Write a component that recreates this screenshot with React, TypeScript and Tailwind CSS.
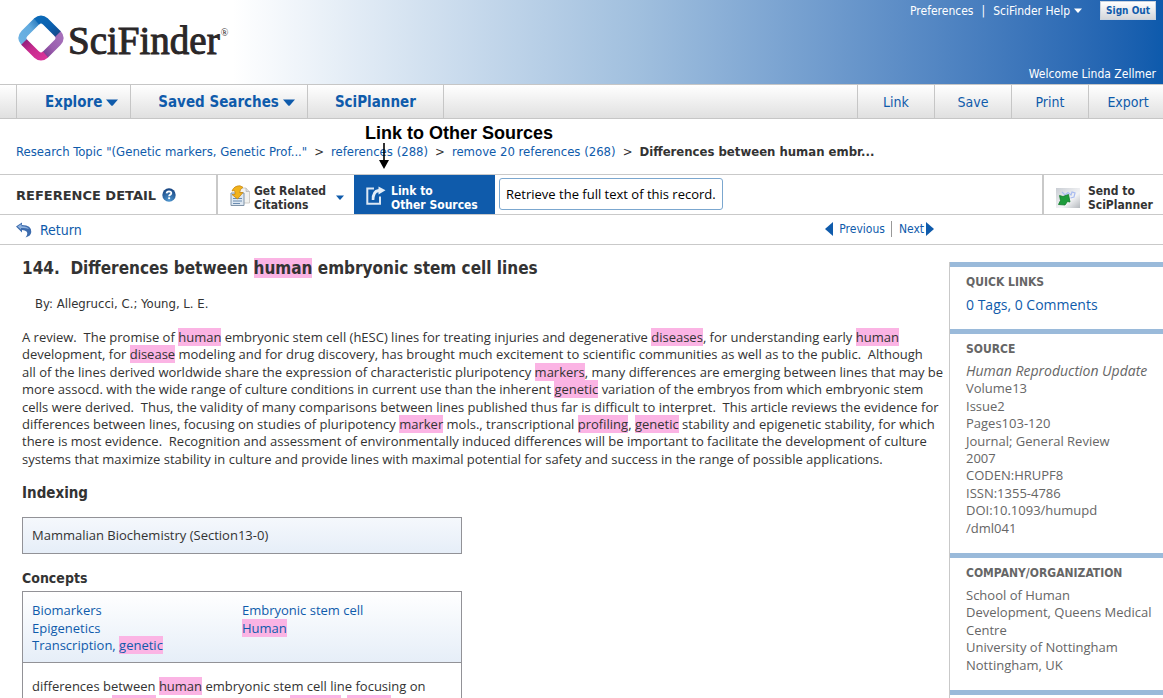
import type { ReactNode } from "react";

function Hit({ children }: { children: ReactNode }) {
  return <mark className="bg-[#fbb4e4] text-inherit">{children}</mark>;
}

function Caret({ className = "" }: { className?: string }) {
  return (
    <svg viewBox="0 0 12 7" className={className} aria-hidden="true">
      <path d="M0 0.500H12L6.800 6.400Q6 7 5.200 6.400Z" fill="currentColor" />
    </svg>
  );
}

function Logo() {
  return (
    <a href="#home" className="flex items-start gap-1 text-[#2b2728]" aria-label="SciFinder home">
      <svg viewBox="0 0 46 46" className="h-[46px] w-[46px]" fill="none" strokeWidth="7.800" aria-hidden="true">
        <defs>
          <linearGradient id="lb" x1="0" y1="1" x2="1" y2="0"><stop offset="0" stopColor="#6bb1e2" /><stop offset="0.600" stopColor="#62abdf" /><stop offset="1" stopColor="#2f7fc0" /></linearGradient>
          <linearGradient id="db" x1="0" y1="0" x2="1" y2="1"><stop offset="0" stopColor="#0b6ab8" /><stop offset="0.600" stopColor="#0b5fae" /><stop offset="1" stopColor="#144a8c" /></linearGradient>
          <linearGradient id="pu" x1="1" y1="0" x2="0" y2="1"><stop offset="0" stopColor="#a56fba" /><stop offset="0.600" stopColor="#9a5fae" /><stop offset="1" stopColor="#7c3c93" /></linearGradient>
          <linearGradient id="mg" x1="0" y1="0" x2="1" y2="1"><stop offset="0" stopColor="#93207c" /><stop offset="0.400" stopColor="#c62a8d" /><stop offset="1" stopColor="#d8329a" /></linearGradient>
        </defs>
        <path d="M6.300 27.500Q2.300 23 6.500 18.500L19 6" stroke="url(#lb)" />
        <path d="M39.500 18.500Q43.700 23 39.500 27.500L27 40" stroke="url(#pu)" />
        <path d="M18.500 6.500Q23 2.500 27.500 6.500L40 19" stroke="url(#db)" />
        <path d="M27.500 39.500Q23 43.500 18.500 39.500L6 27" stroke="url(#mg)" />
      </svg>
      <span className="flex items-start font-['Liberation_Serif',serif] text-[39px] leading-[52px] [-webkit-text-stroke:1px_#2b2728]">
        SciFinder<sup className="top-0 ml-px pt-2 text-[10px] leading-5 [-webkit-text-stroke:0]">®</sup>
      </span>
    </a>
  );
}

const crumbs = ['Research Topic "(Genetic markers, Genetic Prof..."', "references (288)", "remove 20 references (268)"];

function Panel({ title, children }: { title: string; children: ReactNode }) {
  return (
    <section className="border-t-[5px] border-[#9abada] pt-[5px] pr-2 pb-4 pl-4">
      <h2 className="font-['DejaVu_Sans_Condensed',sans-serif] text-[12px] leading-5 font-bold text-[#666]">{title}</h2>
      <div className="mt-1 font-['Open_Sans',sans-serif] text-[13px] leading-[1.34] text-[#666]">{children}</div>
    </section>
  );
}

export default function App() {
  return (
    <div className="h-screen overflow-hidden bg-white font-['DejaVu_Sans_Condensed',sans-serif] text-[13px] text-[#333]">
      <header className="flex h-[84px] justify-between bg-linear-to-r from-white from-20% via-[#a0bfde] via-55% to-[#0d5aac] pl-[18px]">
        <div className="flex items-start pt-[15px]"><Logo /></div>
        <div className="flex flex-col items-end justify-between pr-[7px] pb-0.5 text-[12px] text-white">
          <div className="flex items-center gap-2 pt-px">
            <a href="#preferences">Preferences</a>
            <span>|</span>
            <button type="button" className="flex items-center gap-1">SciFinder Help <Caret className="h-[5px] w-2" /></button>
            <button type="button" className="ml-2.5 h-[19px] border border-[#c9d3df] bg-linear-to-b from-white to-[#d3d6da] px-[5px] text-[10px] leading-4 font-bold text-[#0f5bab]">Sign Out</button>
          </div>
          <span className="leading-4">Welcome Linda Zellmer</span>
        </div>
      </header>

      <nav className="flex h-[35px] justify-between border-y border-[#c6c6c6] bg-linear-to-b from-white to-[#e0e0e0] pl-4 text-[#0f5bab]">
        <div className="flex divide-x divide-[#c6c6c6] border-x border-[#c6c6c6] text-[15px] font-bold">
          <button type="button" className="flex items-center gap-1 pt-px pr-3 pl-7">Explore <Caret className="h-[7px] w-3" /></button>
          <button type="button" className="flex items-center gap-1 pt-px pr-3 pl-[27px]">Saved Searches <Caret className="h-[7px] w-3" /></button>
          <a href="#sciplanner" className="flex items-center px-[27px] pt-px">SciPlanner</a>
        </div>
        <div className="flex divide-x divide-[#c6c6c6] border-l border-[#c6c6c6] text-[14px]">
          {["Link", "Save", "Print", "Export"].map((t) => (
            <button key={t} type="button" className="w-[77px] pt-px last:w-[74px] last:pl-1">{t}</button>
          ))}
        </div>
      </nav>

      <div className="flex h-[55px] items-center gap-[7px] pt-2.5 pl-4">
        {crumbs.map((c) => (
          <span key={c} className="flex gap-[7px]"><a href="#crumb" className="text-[#0f5bab]">{c}</a><span>&gt;</span></span>
        ))}
        <span className="font-bold">Differences between human embr...</span>
      </div>

      <div className="flex h-[41px] border-y border-[#c9c9c9]">
        <div className="flex w-[218px] items-center gap-1 border-r-2 border-[#c9c9c9] pl-4">
          <h1 className="pt-0.5 font-['DejaVu_Sans',sans-serif] text-[13px] font-bold">REFERENCE DETAIL</h1>
          <button type="button" aria-label="Help" className="ml-0.5">
            <svg viewBox="0 0 14 14" className="h-3.5 w-3.5" aria-hidden="true">
              <defs><radialGradient id="hp" cx="0.500" cy="0.900" r="0.900"><stop offset="0" stopColor="#4f97d0" /><stop offset="1" stopColor="#15427f" /></radialGradient></defs>
              <circle cx="7" cy="7" r="6.700" fill="url(#hp)" />
              <path d="M4.600 5.300Q4.800 3.400 7 3.300Q9.400 3.400 9.300 5.200Q9.200 6.300 8 6.900Q7.100 7.400 7.100 8.300" fill="none" stroke="#fff" strokeWidth="1.800" />
              <rect x="6.200" y="9.300" width="1.900" height="1.800" fill="#fff" />
            </svg>
          </button>
        </div>
        <button type="button" className="flex w-[136px] items-center pt-1.5 pl-3 text-left text-[12px] leading-[14px] font-bold">
          <svg viewBox="0 0 20 22" className="mr-1 mb-1 h-[22px] w-5 shrink-0" aria-hidden="true">
            <path d="M9 3H16L19.500 6.500V18H9Z" fill="#f2f2ef" stroke="#c4c2bc" strokeWidth="0.800" />
            <path d="M16 3V6.500H19.500" fill="#ddd" stroke="#aaa" strokeWidth="0.600" />
            <path d="M1 8H14V20.500H1Z" fill="#dde7f1" stroke="#7f93a8" />
            <path d="M3 13.500H12M3 16H12M3 18.500H10" stroke="#6b8cb0" />
            <path d="M2 6Q4 0.700 10 0.800L13 2.300Q9.800 4 9.700 7.500H13L7.500 14L2 9.500H5Q5.300 7 4.500 5.500Z" fill="#f2b31b" stroke="#c78712" strokeWidth="0.800" />
          </svg>
          <span className="w-[82px]">Get Related Citations</span>
          <Caret className="h-[5px] w-2 text-[#0f5bab]" />
        </button>
        <div className="relative flex">
          <button type="button" className="flex w-[141px] items-center bg-[#0f5bab] pt-1.5 pl-3 text-left text-[12px] leading-[14px] font-bold text-white">
            <svg viewBox="0 0 20 20" className="mr-[5px] mb-1 h-5 w-5 shrink-0" fill="none" aria-hidden="true">
              <path d="M8 2.500H1.300V17.700H14V10.500" stroke="#dbe7f4" strokeWidth="2" />
              <path d="M12.500 0.500L19.500 4.300L12.500 8.500V6.200Q8.800 6.500 8.300 14H5.700Q5.300 4 12.500 2.900Z" fill="#e3edf7" />
            </svg>
            <span>Link to<br />Other Sources</span>
          </button>
          <div className="absolute bottom-full left-[11px] font-['Liberation_Sans',sans-serif] text-[18px] leading-5 font-bold whitespace-nowrap text-black">
            Link to Other Sources
            <svg viewBox="0 0 10 26" className="mb-1.5 ml-3.5 block h-[26px] w-2.5" aria-hidden="true">
              <path d="M4.200 0H5.800V17H10L5 26L0 17H4.200Z" fill="#000" />
            </svg>
          </div>
        </div>
        <div role="tooltip" className="my-[3px] ml-1 flex items-center self-start rounded-[3px] border border-[#7ba7cf] px-1.5 py-1 font-['Open_Sans',sans-serif] leading-[22px] text-black">Retrieve the full text of this record.</div>
        <button type="button" className="ml-auto flex w-[121px] items-center border-l-2 border-[#c9c9c9] pt-1.5 pl-3 text-left text-[12px] leading-[14px] font-bold">
          <svg viewBox="0 0 24 20" className="mr-2 h-5 w-6 shrink-0" aria-hidden="true">
            <defs><linearGradient id="sp" x1="0" y1="0" x2="1" y2="1"><stop offset="0" stopColor="#c9cdd3" /><stop offset="0.600" stopColor="#f3f4f6" /><stop offset="1" stopColor="#b4b8bd" /></linearGradient></defs>
            <rect width="24" height="20" fill="url(#sp)" />
            <path d="M6 4L9 7L12 4.500L15 7L16 4L19 5L18 9L14.500 10" fill="none" stroke="#a9bcf0" strokeWidth="1.200" />
            <path d="M3.500 7.500L7 8.500L12.500 6.500L14 14L11.500 13.500L9 17L2.500 16.500L4.500 12.500Z" fill="#1d9c3b" stroke="#117a2b" strokeWidth="0.800" />
          </svg>
          <span>Send to<br />SciPlanner</span>
        </button>
      </div>

      <div className="flex h-[30px] items-center border-b border-[#c9c9c9] pl-4 text-[#0f5bab]">
        <a href="#return" className="flex items-center gap-2 pt-px text-[14px]">
          <svg viewBox="0 0 16 16" className="h-4 w-4" aria-hidden="true">
            <path d="M0 4.500L6 0.500V3Q15.500 3 15.300 10Q15 14 9.500 15.500Q12.500 11.500 10.500 9.500Q9 8 6 8V10.500Z" fill="#3d6cae" />
            <path d="M1.500 4.500L5.500 2V4.200Q11 4 13 7Q9 5.500 5 6V7.500Z" fill="#8fb2dd" />
          </svg>
          Return
        </a>
        <div className="mr-[229px] ml-auto flex h-4 items-center pb-0.5 text-[12px]">
          <a href="#previous" className="flex items-center gap-1.5 border-r border-[#999] pr-1.5 leading-4">
            <svg viewBox="0 0 8 14" className="h-3.5 w-2" aria-hidden="true"><path d="M8 0V14L0 7Z" fill="#0f5bab" /></svg>Previous
          </a>
          <a href="#next" className="flex items-center pl-[7px] leading-4">
            Next<svg viewBox="0 0 8 14" className="ml-0.5 h-3.5 w-2" aria-hidden="true"><path d="M0 0V14L8 7Z" fill="#0f5bab" /></svg>
          </a>
        </div>
      </div>

      <div className="flex pt-[17px]">
        <main className="min-w-0 flex-1 pl-[22px] font-['Open_Sans',sans-serif]">
          <h2 className="-mt-1 font-['DejaVu_Sans_Condensed',sans-serif] text-[17px] leading-5 font-bold">144.&nbsp; Differences between <Hit>human</Hit> embryonic stem cell lines</h2>
          <p className="mt-4 pl-[13px] font-['DejaVu_Sans_Condensed',sans-serif] leading-5">By: Allegrucci, C.; Young, L. E.</p>
          <p className="mt-[15px] leading-[1.34] whitespace-nowrap">
            A review.&nbsp; The promise of <Hit>human</Hit> embryonic stem cell (hESC) lines for treating injuries and degenerative <Hit>diseases</Hit>, for understanding early <Hit>human</Hit><br />
            development, for <Hit>disease</Hit> modeling and for drug discovery, has brought much excitement to scientific communities as well as to the public.&nbsp; Although<br />
            all of the lines derived worldwide share the expression of characteristic pluripotency <Hit>markers</Hit>, many differences are emerging between lines that may be<br />
            more assocd. with the wide range of culture conditions in current use than the inherent <Hit>genetic</Hit> variation of the embryos from which embryonic stem<br />
            cells were derived.&nbsp; Thus, the validity of many comparisons between lines published thus far is difficult to interpret.&nbsp; This article reviews the evidence for<br />
            differences between lines, focusing on studies of pluripotency <Hit>marker</Hit> mols., transcriptional <Hit>profiling</Hit>, <Hit>genetic</Hit> stability and epigenetic stability, for which<br />
            there is most evidence.&nbsp; Recognition and assessment of environmentally induced differences will be important to facilitate the development of culture<br />
            systems that maximize stability in culture and provide lines with maximal potential for safety and success in the range of possible applications.
          </p>
          <h3 className="mt-[15px] font-['DejaVu_Sans_Condensed',sans-serif] text-[15px] leading-5 font-bold">Indexing</h3>
          <div className="mt-3.5 w-[440px] border border-[#929297] bg-linear-to-b from-[#f5f8fc] to-[#e6eef8] px-[9px] py-2 leading-[19px]">Mammalian Biochemistry (Section13-0)</div>
          <h3 className="mt-3.5 font-['DejaVu_Sans_Condensed',sans-serif] text-[14px] leading-5 font-bold">Concepts</h3>
          <div className="mt-[3px] w-[440px] border border-[#929297] leading-[1.34]">
            <div className="grid grid-cols-2 border-b border-[#929297] bg-linear-to-b from-white to-[#e6eef8] px-[9px] pt-2.5 pb-2 text-[#0f5bab]">
              <ul><li><a href="#c1">Biomarkers</a></li><li><a href="#c2">Epigenetics</a></li><li><a href="#c3">Transcription, <Hit>genetic</Hit></a></li></ul>
              <ul><li><a href="#c4">Embryonic stem cell</a></li><li><a href="#c5"><Hit>Human</Hit></a></li></ul>
            </div>
            <p className="px-[9px] pt-[15px] pb-3">differences between <Hit>human</Hit> embryonic stem cell line focusing on pluripotency <Hit>marker</Hit> mols., transcriptional <Hit>profiling</Hit>, <Hit>genetic</Hit> stability</p>
          </div>
        </main>
        <aside className="w-[214px] shrink-0 border-l border-[#c9c9c9]">
          <Panel title="QUICK LINKS"><a href="#tags" className="block text-[14px] leading-[17px] text-[#0f5bab]">0 Tags, 0 Comments</a></Panel>
          <Panel title="SOURCE">
            <em className="text-[14px] leading-none">Human Reproduction Update</em><br />Volume13<br />Issue2<br />Pages103-120<br />Journal; General Review<br />2007<br />CODEN:HRUPF8<br />ISSN:1355-4786<br />DOI:10.1093/humupd<br />/dml041
          </Panel>
          <Panel title="COMPANY/ORGANIZATION">School of Human<br />Development, Queens Medical<br />Centre<br />University of Nottingham<br />Nottingham, UK</Panel>
          <div className="h-8 border-t-[5px] border-[#9abada]" />
        </aside>
      </div>
    </div>
  );
}
